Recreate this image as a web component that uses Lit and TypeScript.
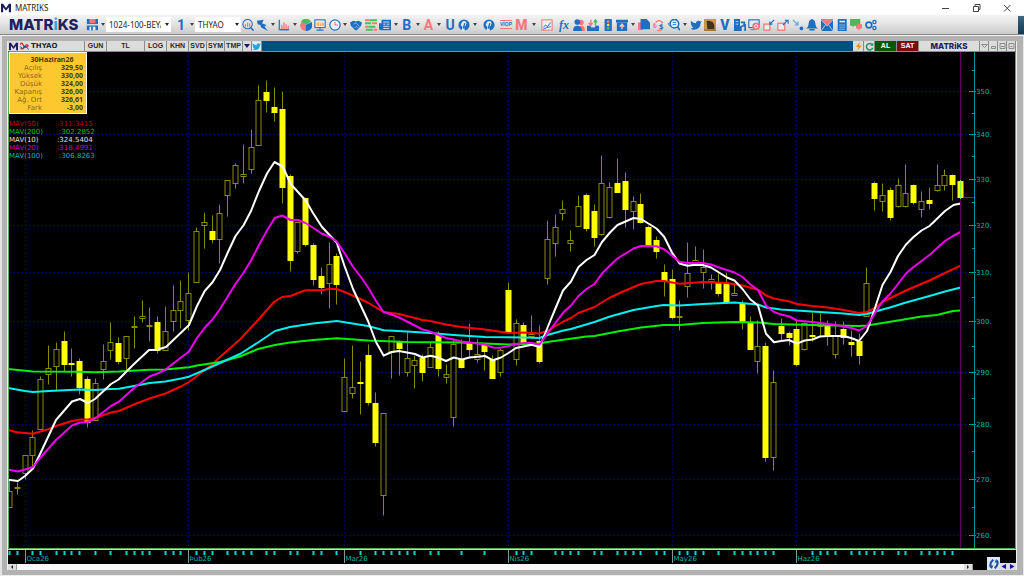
import { LitElement, html, svg, css, nothing } from "lit";
import { customElement, property } from "lit/decorators.js";

const B = "#1f6fc0";
const R = "#f4787c";

const ICONS: Record<string, unknown> = {
  save: svg`<path d="M1 0h13v13H1z" fill="${B}"/><path d="M4 0h7v5H4z" fill="${R}"/><path d="M1 6h13v1.500H1z" fill="#eee"/><path d="M4 9h7v4H4z" fill="#eee"/><path d="M6 9h2v4H6z" fill="${B}"/>`,
  search: svg`<circle cx="6.5" cy="6" r="5.500" fill="none" stroke="${B}" stroke-width="1.2"/><path d="M4 9V6M6.500 9V4M9 9V5" stroke="${R}" stroke-width="1.4"/><path d="M10 10l3.500 3.500" stroke="${B}" stroke-width="1.8"/>`,
  bolt: svg`<path d="M1 2l8-1-2 4 5 2-2 2 4 5-8-4-1-3-3-1z" fill="${B}"/>`,
  bars: svg`<path d="M1.500 1v11.500H13" fill="none" stroke="${B}" stroke-width="1.4"/><path d="M4.500 12V7M7 12V4M9.500 12V6M12 12V8" stroke="${R}" stroke-width="1.500"/><path d="M3 13h10" stroke="${B}" stroke-dasharray="1 1"/>`,
  pie: svg`<path d="M7 7V14A7 7 0 0 1 0 7L2 3z" fill="${R}"/><path d="M7 7L1 3A7 7 0 0 1 13 3z" fill="#44c25a"/><path d="M7 7l6.500-3.500A7 7 0 0 1 7 14z" fill="${B}"/>`,
  board: svg`<rect x="1" y="1" width="12" height="9" fill="#f5ead8" stroke="${B}" stroke-width="1.2"/><path d="M3.500 8V4M5.500 8V4M7.500 8V5M9.500 8V4M11 8V5" stroke="#e69a45"/><path d="M7 10v2M3 13h8" stroke="${B}" stroke-width="1.3"/>`,
  clock: svg`<circle cx="7" cy="7" r="6" fill="#eef4fa" stroke="${B}" stroke-width="1.4"/><path d="M7 3.500V7h3.500" fill="none" stroke="${R}" stroke-width="1.3"/>`,
  hands: svg`<path d="M0 4l4-2 3 1 3-1 4 2-1 4-5 5-2 0-5-5z" fill="${B}"/><path d="M4 6l3-1.500 4 4M5 9l2 2M7 8l2 2" stroke="#b9d3ee" fill="none" stroke-width=".8"/>`,
  list: svg`<path d="M0 1.500h5M8 5h6M0 9h4M10 12.500h4" stroke="${R}" stroke-width="2.500"/><path d="M5 1.500h9M0 5h7M4 9h8M1 12.500h8" stroke="#44c25a" stroke-width="2.500"/>`,
  news: svg`<path d="M3 1h11v12H2q-2 0-2-2V5h3z" fill="${B}"/><path d="M5 3.500h7M5 6h2.500M5 8.500h7M5 11h7M9 6h3" stroke="#d8e6f4" stroke-width="1.100"/>`,
  head: svg`<circle cx="7" cy="7" r="6.500" fill="${B}"/><path d="M5 3q4-2 5 2l-1 3-2 1 1 5H4l1-5-2-2z" fill="#dbe8f4"/><path d="M8 5l-2 6" stroke="${B}" stroke-width="1.500"/>`,
  chart: svg`<rect x="1" y="1" width="12" height="12" fill="#eee" stroke="${R}" stroke-width="1.2"/><path d="M2.500 10l3-3 2 2 4-5M2.500 12l4-2 5-1" fill="none" stroke="${B}" stroke-width="1.1"/>`,
  people: svg`<circle cx="9.500" cy="4" r="3" fill="${R}"/><path d="M8 8q6-1 6 6h-4z" fill="${R}"/><circle cx="5" cy="3.500" r="3.300" fill="${B}"/><path d="M0 14q0-6 5-6t5.500 6z" fill="${B}"/>`,
  inbox: svg`<path d="M0 8h4l1 2h4l1-2h4v6H0z" fill="${B}"/><path d="M4.500 1v6M2 4.500l2.500 3 2-3" stroke="${R}" stroke-width="1.600" fill="none"/><path d="M10 8V2M8 4l2-3 2 3" stroke="#44c25a" stroke-width="1.600" fill="none"/>`,
  traffic: svg`<rect x="3" y="0" width="8.500" height="14" rx="1" fill="${B}"/><circle cx="7.200" cy="3" r="1.600" fill="${R}"/><circle cx="7.200" cy="7" r="1.600" fill="#ffd83b"/><circle cx="7.200" cy="11" r="1.600" fill="#44c25a"/>`,
  folder: svg`<path d="M0 1h14v3H0zM1 4.500h12V14H1z" fill="${B}"/><path d="M7 12V7M4.500 9L7 6l2.500 3" stroke="#f7c9cb" stroke-width="1.600" fill="none"/>`,
  docs: svg`<path d="M0 4h6v9H0z" fill="${R}"/><path d="M3 0h7l4 4v8H3z" fill="${B}"/>`,
  money: svg`<path d="M3 4q4-4 8 0l-1 1M11 12q-3 2-6 1" stroke="${R}" fill="none" stroke-width="1.500"/><text x="0" y="11" font-size="8" font-weight="700" fill="${R}">₺</text><text x="7" y="12" font-size="9" font-weight="700" fill="${B}">$</text>`,
  find: svg`<circle cx="7.500" cy="5.500" r="5" fill="#e4eef8" stroke="${B}" stroke-width="1.800"/><path d="M11 9l3 4" stroke="${B}" stroke-width="2"/><path d="M5.500 4h4M5.500 6.500h4M0 6l2-2M0 6l2 2" stroke="${B}"/>`,
  bird: svg`<path d="M1 2q3 3 6 3 0-3 3-3 1.500 0 2 1l2-.5-1.500 2Q12 12 5 12.500q-3 0-4.500-1.500 2 0 3.500-1-2-.5-2.500-2h1Q.8 7 1 5z" fill="${B}"/>`,
  tweet: svg`<path d="M0 0h14v14H0z" fill="#e6eef3"/><path d="M1 2q3 3 6 3 0-3 3-3 1.500 0 2 1l2-.5-1.500 2Q12 12 5 12.500q-3 0-4.500-1.500 2 0 3.500-1-2-.5-2.500-2h1Q.8 7 1 5z" fill="#2aa3e0"/>`,
  sepia: svg`<path d="M0 0h14v14H0z" fill="#c39a4c"/><path d="M3 2q9 0 9 6v4H4z" fill="#453218"/><path d="M0 12h14v2H0z" fill="#a57c34"/>`,
  building: svg`<path d="M0 0h7v14H0z" fill="${B}"/><path d="M2 3h3M2 6h3" stroke="#cfe0f2"/><path d="M8 14V9l5-2v7M8 4h4v3" fill="none" stroke="${B}" stroke-width="2"/>`,
  monitor: svg`<rect x="1" y="1" width="12" height="9" fill="#e8edf2" stroke="${B}" stroke-width="1.300"/><path d="M3 12.500h5" stroke="${B}"/><circle cx="9.500" cy="8.500" r="4.500" fill="${R}"/><circle cx="9.500" cy="8.500" r="1.800" fill="none" stroke="#fff"/>`,
  boxin: svg`<rect x="1" y="6" width="7" height="7" fill="#eee" stroke="${R}" stroke-width="1.500"/><path d="M13 1L8 6M8 3v3h3" stroke="${B}" stroke-width="1.300" fill="none"/>`,
  boxout: svg`<rect x="1" y="5" width="8" height="8" fill="#eee" stroke="${R}" stroke-width="1.500"/><path d="M7 7l5-5M9 1.500h4v4" stroke="${B}" stroke-width="1.300" fill="none"/>`,
  arrow: svg`<path d="M1 1l6 6M7 3v4H3" stroke="#5da5dc" stroke-width="1.300" fill="none"/><circle cx="11" cy="11" r="2.200" fill="${B}"/>`,
  bell: svg`<path d="M7 0q4 1 4 6 0 3 3 5H0Q3 9 3 6 3 1 7 0z" fill="${B}"/><path d="M4 12.500h6" stroke="${B}" stroke-width="2"/>`,
  mail: svg`<path d="M0 0h14v14H0z" fill="${B}"/><path d="M0 0h14L7 8z" fill="${R}"/><path d="M0 1l7 7 7-7M0 14l5-7M14 14L9 7" stroke="#e9eef4" stroke-width=".8" fill="none"/>`,
  calc: svg`<rect x="2" y="0" width="10.500" height="14" rx="1" fill="${B}"/><path d="M4 3h6.500" stroke="#dce9f5" stroke-width="2"/><path d="M4 7h6.500M4 9.500h6.500M4 12h6.500" stroke="#dce9f5" stroke-dasharray="1.500 .8"/>`,
  chat: svg`<path d="M7 6h7v5h-2l-2 3v-3H7z" fill="${R}"/><path d="M0 0h12v8H5l-2 2V8H0z" fill="#4bb95a"/><circle cx="10.500" cy="8.500" r="3" fill="${R}"/>`,
  gears: svg`<circle cx="4.500" cy="7" r="3.300" fill="none" stroke="${B}" stroke-width="2"/><circle cx="11" cy="3.500" r="1.900" fill="none" stroke="${B}" stroke-width="1.500"/><circle cx="11" cy="10.500" r="1.900" fill="none" stroke="${B}" stroke-width="1.500"/>`,
  flash: svg`<path d="M9 0L3 7l4 1-3 6 8-8-4-1z" fill="#f0930c"/>`,
  reload: svg`<path d="M11 4A5 5 0 1 0 12 9" stroke="#169b6b" stroke-width="2.500" fill="none"/><path d="M13 1v5H8z" fill="#169b6b"/>`,
  sync: svg`<path d="M6 1Q0 6 3 12M8 13q6-5 3-11" fill="none" stroke="#1d56a5" stroke-width="3"/><path d="M0 9h6l-2 5zM8 5h6l-4-5z" fill="#1d56a5"/>`,
  spark: svg`<path d="M0 4q3-5 5 1t8 1M1 10q4 2 6-2 3-6 6-2" stroke="#c62b3c" stroke-width="2" fill="none"/><path d="M0 7l4 3 4-4 6 6" stroke="#2b3fa5" stroke-width="1.500" fill="none"/>`,
  mark: svg`<path d="M0 13V1h3l4 6 4-6h3v12h-3V6l-4 5-4-5v7z" fill="#1b1b5e"/>`,
};

type Tool = { icon?: string; glyph?: string; tone?: string; label: string; menu?: boolean };
const t = (icon: string, label: string, menu = false): Tool => ({ icon, label, menu });
const g = (glyph: string, tone: string, label: string, menu = false): Tool => ({ glyph, tone, label, menu });

const GROUPS: { cls: string; tools: Tool[] }[] = [
  { cls: "g-main", tools: [t("search", "Ara"), t("bolt", "Hızlı", true), t("bars", "Grafik", true), t("pie", "Dağılım"), t("board", "Tahta"), t("clock", "Saat", true), t("hands", "Takas"), t("list", "Derinlik"), t("news", "Haber", true), g("B", "blue", "B", true), g("A", "red", "A", true), g("U", "blue", "U"), t("head", "Analiz", true)] },
  { cls: "", tools: [t("head", "Uzman")] },
  { cls: "g-mid", tools: [g("VİOP", "tiny", "VİOP"), g("M", "red heavy", "M", true)] },
  { cls: "", tools: [t("chart", "Gösterge")] },
  { cls: "g-wide", tools: [g("fx", "fx", "Formül"), t("people", "Kullanıcı"), t("inbox", "Emir"), t("traffic", "Sinyal"), t("folder", "Sayfa", true), t("docs", "Kopya"), t("money", "Döviz"), t("find", "Tarama", true), t("bird", "Twitter"), t("sepia", "Portre"), g("V", "blue heavy", "V"), t("building", "Şirket"), t("monitor", "Ekran"), t("boxin", "Küçült"), t("boxout", "Büyüt"), t("arrow", "Taşı"), t("bell", "Alarm"), t("mail", "Mesaj"), t("calc", "Hesap"), t("chat", "Sohbet"), t("gears", "Ayarlar")] },
];

/* One session per row: high, body top, body bottom, low, 1 when the close is below the open. */
const CANDLES: number[][] = [
  [480,491,507,507,0],[482,487.5,488,494,0],[455,455,473,479,0],[430,437,455.5,466,0],[376,379,429,429,0],[345,368.5,374.5,384.5,0],[342.5,349,366.5,390,0],[331.5,341.7,364,371,1],[348.7,363,364.5,376.7,1],[358.7,361.7,387.7,394.5,1],
  [376.7,379.5,422.5,427.3,1],[378,383.3,420.5,420.5,0],[344,361.5,369.7,379.5,0],[322.7,342.5,350.7,359,0],[337.5,343,361.7,364,1],[336.5,336.5,358.7,371.7,0],[316,326.3,326.7,348,0],[300,316.7,318.7,322.7,0],[307.3,325,326.5,341.3,0],[316,322.7,350,353,1],
  [306,331.5,350.3,350.3,0],[285,310.5,321.5,331.5,0],[280.7,301.5,310.5,328,0],[272.3,293,320.3,330.7,0],[227.7,231,282.3,282.3,0],[212,222.5,225,248,0],[215.3,231.5,239,243.7,1],[204,213.3,239,263.3,0],[180,180.7,195.3,216.7,0],[163.7,165.3,183.7,188.3,0],
  [144,174.5,176.5,183,0],[129,147.5,169.5,173.7,0],[85,100.3,145.3,145.3,0],[80,92.3,100.7,112.7,1],[87.3,107,112.7,121.3,1],[91,109,187,203.3,1],[174,176.3,260.3,271.3,1],[222.3,222.3,251.3,253.7,0],[197,198.3,244.7,246.7,1],[243,245,279.7,285.7,1],
  [267.3,276,287,294.7,1],[242,264.3,283.3,308.7,0],[253,256.7,284.3,304.7,1],[358.7,377,411.3,411.3,0],[345,387.3,393.7,398,0],[361.7,382.3,383.7,414,1],[344.7,355.3,402.7,405,1],[392.7,403.3,442.3,446.7,1],[413.3,413.3,495.7,515.7,0],[336.3,336.3,352,378,0],
  [340,342.7,348,375.3,1],[332.7,358,372.3,376,0],[355,360.3,365.7,388.7,0],[354,358,372.3,381.3,1],[342.7,347.3,367,367,0],[331.3,334.7,368.3,376.7,1],[364,374.7,377,383.3,0],[338,344,417.7,426.3,0],[339,359.3,367,368.3,1],[323.3,343.3,349,357.3,1],
  [339,354.3,359,362.7,0],[344,345.3,351.7,370,1],[355,359,378.7,378.7,1],[348,350.3,372.7,376,0],[282.7,290,331.7,331.7,1],[319,323,359.3,365,0],[322.7,325,342,342,1],[315,334,336.3,338.7,0],[325,341.7,361.7,363.3,1],[220,239,278.3,284,0],
  [214,227.3,243.7,256.7,0],[200,209.3,213.3,220,0],[230.7,240.3,243.7,251.7,0],[195,206.3,226.7,226.7,0],[193,195,228.3,231.7,1],[204.3,211,237.7,246.7,1],[155.7,183.3,234.7,235,0],[182.3,187.3,217.7,218,0],[158.7,183.3,192.7,192.7,1],[172.7,181,209.3,227.3,1],
  [196.7,201.3,211.3,229,0],[193.3,204.3,222.3,223.7,1],[225,227,245.7,245.7,1],[236,240.3,251,258.7,1],[264.7,272.3,280,296,1],[269.3,279.7,317.7,319.3,1],[300,316.3,317.7,330,0],[242,273.7,286.7,297.3,0],[246.7,260.3,262.7,265,0],[249.3,267.3,272.7,288,0],
  [274.3,279.3,281.3,289.7,0],[273.3,283.3,293.3,296,1],[272,283.7,302,302,1],[284.3,293,295.7,295.7,0],[300,303.3,321.7,329.3,1],[316,323,349.3,349.3,1],[320,346.3,361.7,373.3,0],[342.7,346,457.3,461,1],[370.7,382.3,457.3,470.7,0],[318.7,326,333.7,340.3,1],
  [331,333.3,337.7,345,1],[319,329,364.7,366.7,1],[322,323,349.3,350,0],[312,335,336.3,341.7,1],[313,323.7,326.3,336.7,0],[320,325,336.3,345,1],[321,335,354.3,358.7,0],[321,329,337.3,344,1],[330,342,344.3,356,1],[333.3,341.3,355.7,364.3,1],
  [267.3,283.3,316,316,0],[181.3,183.3,198.7,210,1],[183.3,195.3,201.7,211.7,0],[187,190.3,217.3,220.7,1],[178.7,185.3,206.7,207,0],[164,193.3,206.7,207,0],[184,185.3,202.7,204.3,1],[191,201.3,209.3,217,0],[187,200.3,203.3,209.7,1],[164,185.3,190.7,191,0],
  [169,175.3,185.3,190,0],[174,175.3,184,200.7,1],[179,181,197,206,1],
];

const LINES: [string, string][] = [
  ["#ff0000", "8,430 17,432.3 33,433.7 49,429 56,426 72,421 80,419.5 88,419.5 95,418 111,412.5 119,411 134,404.5 149.5,398.5 165.5,393.5 181,386.5 189,382 197,376 212,364.5 220,357 240,339.5 258.5,319.5 274.5,301.5 282,297 290.5,296 298,293 305.5,290.3 321.5,290.3 329,289 336.7,289 344.5,292 360.5,299 368.5,303 383.7,312 399,314 422.5,320 430,321 446,324.5 461.5,327 485,329.5 508.5,333 524,332.5 539.5,333.5 547,331 563.5,321.5 571,318 578.5,313 594.5,307 610,297.5 625.5,290.5 641,284 656.5,281 664,281 679.5,283.7 703,282 727,283 742.5,285.5 758,289.7 766,295.5 774,298.5 789.5,301.5 797,304 812,306 828,307.5 843.5,310 859,313 867,312 875,308 882.5,302 906,290.5 929.5,280.5 945,273 960.5,265.7"],
  ["#00f000", "8,369 33,371.5 80,371.7 95,372.3 119,371.5 149.5,369.7 165,369.5 189,367.3 197,365.5 220,362 240,356.5 258,349 275,345 290,342.5 313,340 337,338.3 368,340.5 407,342 461.5,342.5 508.5,344.5 539.5,343.5 547.3,342 586.5,336.5 594.5,336 617.5,331.5 641,327.5 664,325 679.5,325 703,323 734.5,322 758,322.5 774,324 812,325 859,326 867,325.5 898,320.5 921.5,316.5 937,315 953,311 960.5,310.5"],
  ["#00f0f0", "8,388 25,391 33,392 49,391 80,389.5 95,390 111,389 119,388.7 134,386 149.5,383 165.5,381.5 181,378.5 189,376.7 204.5,370 220,363 240,354 258,342.5 275,331 290,327 313,323.5 337,321 368,326 383.7,330.3 407,331.5 430,333 453.5,335 485,337 524,337.5 539.5,338 547.3,335 563.5,330.5 571,329 594.5,322 610,316.5 633.5,310 656.5,306 664,305 679.5,305.5 703,304 734.5,302.5 758,304.5 766,307.5 781,309.5 812,311.5 828,312.5 843.5,313.5 859,315 867,314 882.5,309.5 890,307.5 906,302.5 929.5,296 945,291.5 960.5,287.5"],
  ["#ffffff", "8,479.7 18,481 25,476 33,468.5 41,452 56,420 72,401.5 80,399 88,403 95,399 111,384 118.6,379.5 134,364 149,350 157,349.7 166,347 189,325 197,306 204.7,291 212.7,282 220,270 228,252 235.5,236 243.7,225 251,211 259,191 267,173.5 274.5,162 282.7,166.5 290.7,184 305.7,200.5 313,213 322,227 329,234.5 336.7,242.5 344.5,266 353,289 368,321 376,342 383.7,355.7 391.5,352 399,351 415,354 422.7,357.5 430.5,355.7 438,357.5 446,361 453.7,357.5 462,359.5 469.5,357.5 485,356 493,360.3 501,357.5 508.5,353 516,348 531.7,344.7 539.7,347 547.3,328 555,309.5 563,290.5 571,281.5 578.5,267 586.5,260 594.5,255 602,242 610,232.5 617.5,225 625.5,221.5 633.5,218 641,219 656.5,228.5 664.3,237 672,252.5 679.5,263.5 687.5,265.7 695.5,264.7 703,265 711,267.5 727,277.5 734.5,280.5 742.5,289 750.5,299.5 758,305.5 766,333.8 774,342.3 781,341 789,340 797,343.7 804.6,340.5 812.5,339.5 820,336.5 828,336 843.5,336 851,338 859,341 867,331 875,308 882.5,285 890.5,272 898,256 906,244.5 913.5,237 921.5,230.5 929.5,226 945,211 953.5,205 960.5,203.5"],
  ["#f000f0", "8,469.5 17.7,471.5 25,469.5 33,467 41,457 56,440 72,425.5 80,422.5 88,422 95,418.5 111,406 119,401.7 134,388 149.5,376.5 157.5,373.5 165,370 181,357.5 189,351.5 197,338 204.5,328 212.5,319.5 220,309 235.5,284 243.7,272.5 251,260.5 259,245 267,230.5 274.7,218 282.3,215.5 290.5,220 298,220 305.5,223 313.5,228 321.5,233.5 329,236.5 336.7,241.5 344.5,253 352.5,266 360.5,276.5 368.5,288 376,301 383.5,312 391.5,314.5 399,317.5 407,321.5 422.5,329.5 430,331.5 446,338 453.5,339.5 461.5,341.5 469,342.5 485,344.5 493,347.5 500,347.7 508.5,346 516.5,344 524,343 532,343 539.5,344.5 547,334 563.5,312.3 571,305.5 578.5,296 586.5,289 594.5,284 602,273.5 610,265.5 617.5,258.5 633.5,248.5 641,246 656.5,246.3 664.5,249.5 679.5,261.7 687.5,263 703,263 711,264.5 719,267.5 734.5,272.5 742.5,277 750.5,284.5 758,290 766,305.5 774,312 781,314.5 789.5,316.5 797,320.5 812,322 828,324 836,325 851.5,328 859,330.5 867,326 875,313 882.5,301.5 890,294 898,284 906,273.5 913.5,267 929.5,255 945,241 953,236 960.5,232"],
];

const PRICES: [number, number][] = [[350,91],[340,134],[330,179],[320,225],[310,272],[300,321],[290,372],[280,424],[270,479],[260,535]];
const HALF = [70, 113, 156, 202, 248, 297, 346, 398, 451, 507];
const MONTHS: [string, number][] = [["Oca26", 2], ["Þub26", 23], ["Mar26", 43], ["Nis26", 64], ["May26", 85], ["Haz26", 101]];
const DAY_TICKS = [0,1,3,4,6,7,8,9,11,13,15,16,17,18,20,21,22,24,25,26,28,29,30,31,33,34,36,37,39,40,42,45,47,48,49,50,51,52,54,55,58,61,65,66,67,70,71,72,73,75,76,78,79,80,81,83,84,86,87,88,89,91,93,94,95,96,97,98,103,104,105,106,108,109,110,111,112,114,115,117,118,119,120,121];

const xAt = (i: number) => Math.round(9.5 + i * 7.795 - 0.5) + 0.5;

@customElement("mx-icon")
class MxIcon extends LitElement {
  @property() name = "";
  static styles = css`
    :host { display: block; width: 12px; height: 12px; }
    .art { display: block; width: 100%; height: 100%; font-family: "Noto Sans", sans-serif; }
  `;
  render() {
    return html`<svg class="art" viewBox="0 0 14 14" aria-hidden="true">${ICONS[this.name]}</svg>`;
  }
}

@customElement("mx-toolbar")
class MxToolbar extends LitElement {
  static styles = css`
    :host { display: flex; align-items: center; height: 20px; flex: none; padding-left: 9px;
      background: linear-gradient(#f3f3f3, #e4e4e4 45%, #cbcbcb); border-bottom: 1px solid #858585; box-sizing: border-box;
      font-family: "Noto Sans", sans-serif; }
    .logo { font: 800 15px/18px Inter, sans-serif; color: #211f5f; width: 76px; }
    .logo .i { color: #35a3dc; }
    button { display: grid; place-items: center; border: 0; background: none; padding: 0; width: 14px; height: 16px; font-family: Roboto, sans-serif; }
    .caret { width: 7px; }
    .caret::before { content: ""; border: 2px solid transparent; border-top: 3px solid #444; border-bottom: 0; }
    .blue { color: #1f6fc0; font: 700 14px/14px Roboto, sans-serif; }
    .red { color: #f4787c; font: 700 14px/14px Roboto, sans-serif; }
    .blue.heavy, .red.heavy { font-weight: 900; }
    .fx { color: #1f6fc0; font: italic 700 12px/12px "Liberation Serif", serif; }
    .tiny { color: #1f6fc0; font: 700 5px/7px "Liberation Sans", sans-serif; border-top: 1px solid #f4787c; border-bottom: 1px solid #f4787c; }
    .box { position: relative; height: 15px; display: flex; background: #fff; }
    .page { width: 65px; }
    .symbol { width: 46px; }
    .one { width: 14px; }
    .page + .one { margin-left: 3px; }
    select { appearance: none; border: 0; background: none; margin: 0; padding: 0 0 0 3px; width: 100%; color: #222; border-radius: 0;
      font: 8px/15px "Noto Sans", sans-serif; }
    .page select { width: 55px; overflow: hidden; text-overflow: clip; }
    .box::after { content: ""; position: absolute; right: 2px; top: 6px; border: 2px solid transparent; border-top: 3px solid #222; border-bottom: 0; }
    .groups { display: flex; gap: 3px; flex: none; }
    .group { display: flex; justify-content: space-between; }
    .g-main { width: 238px; }
    .g-mid { width: 38px; }
    .g-wide { width: 321px; }
    .edge { margin-left: auto; width: 6px; height: 18px; background: linear-gradient(#3d6782, #15384f); }
  `;
  tool(x: Tool) {
    return html`<button aria-label=${x.label}>${x.icon ? html`<mx-icon name=${x.icon}></mx-icon>` : html`<span class=${x.tone}>${x.glyph}</span>`}</button>
      ${x.menu ? html`<button class="caret" aria-label="${x.label} menüsü"></button>` : nothing}`;
  }
  render() {
    return html`
      <span class="logo">MATR<span class="i">i</span>KS</span>
      <button aria-label="Kaydet"><mx-icon name="save"></mx-icon></button>
      <button class="caret" aria-label="Kaydet menüsü"></button>
      <label class="box page"><select aria-label="Sayfa"><option>1024-100-BEYAZ</option></select></label>
      <button class="one" aria-label="1"><span class="blue">1</span></button>
      <button class="caret" aria-label="1 menüsü"></button>
      <label class="box symbol"><select aria-label="Sembol"><option>THYAO</option></select></label>
      <div class="groups">${GROUPS.map((x) => html`<div class="group ${x.cls}">${x.tools.map((y) => this.tool(y))}</div>`)}</div>
      <span class="edge"></span>`;
  }
}

@customElement("mx-chart")
class MxChart extends LitElement {
  static styles = css`
    :host { display: block; position: relative; flex: 1; min-height: 0; background: #000; font-family: "DejaVu Sans", sans-serif; }
    .plot { display: block; width: 100%; height: 100%; }
    .grid { stroke: #000058; stroke-dasharray: 2 2; }
    .axis { stroke: #009494; fill: none; }
    .lbl { fill: #00b0b0; font-size: 7px; }
    .wick { stroke: #8a8a00; fill: none; }
    .full { fill: #ffff00; stroke: #ffff00; }
    .ma { fill: none; stroke-width: 2; stroke-linejoin: round; }
    .panel { position: absolute; left: 1px; top: 1px; width: 78px; box-sizing: border-box; padding: 3px 3px 1px; background: #fdc82f;
      border: 1px solid #fff; color: #4a3705; font-size: 7px; line-height: 8px; }
    table { border-collapse: collapse; width: 100%; }
    caption { font: 700 7px/8px "Noto Sans", sans-serif; padding-left: 8px; }
    th { font-weight: 400; text-align: right; padding: 0; color: #87691a; width: 29px; }
    td { font: 700 7px/8px "Noto Sans", sans-serif; text-align: right; padding: 0; }
    .mavs { position: absolute; left: 1px; top: 69px; margin: 0; padding: 0; list-style: none; font-size: 7px; line-height: 8px; }
    .mavs li { display: flex; gap: 16px; }
    .mavs .tag { min-width: 32px; }
    .m50 { color: #b40000; } .m200 { color: #00c000; } .m10 { color: #e4e4e4; } .m20 { color: #c000c0; } .m100 { color: #00b4b4; }
  `;
  candle(c: number[], i: number) {
    const x = xAt(i);
    const [h, a, b, l] = c.slice(0, 4).map((v) => Math.round(v - 0.5) + 0.5);
    return svg`<path class="wick" d="M${x} ${h}V${a}M${x} ${b}V${l}"/>
      <rect class=${c[4] ? "full" : "wick"} x=${x - 2.5} y=${a} width="5" height=${Math.max(b - a, 1)}/>`;
  }
  render() {
    const days: [string, string][] = [["Açılış", "329,50"], ["Yüksek", "330,00"], ["Düşük", "324,00"], ["Kapanış", "326,00"], ["Ağ. Ort", "326,61"], ["Fark", "-3,00"]];
    const mavs: [string, string][] = [["50", "311.3415"], ["200", "302.2852"], ["10", "324.5404"], ["20", "318.4991"], ["100", "306.8263"]];
    return html`
      <svg class="plot" viewBox="8 51 1008 513" role="img" aria-label="THYAO günlük grafik">
        ${PRICES.map(([, y]) => svg`<path class="grid" d="M9 ${y + 0.5}H968"/>`)}
        ${MONTHS.map(([, i]) => svg`<path class="grid" d="M${xAt(i)} 52V548"/>`)}
        ${CANDLES.map((c, i) => this.candle(c, i))}
        ${LINES.map(([c, p]) => svg`<polyline class="ma" stroke=${c} points=${p}/>`)}
        <path d="M960.5 52V548" stroke="#600060"/>
        <path d="M960.5 180V199" stroke="#7cff40"/>
        <path d="M964 197.500H974" stroke="#007000"/>
        <path class="axis" d="M974.500 52V548"/>
        ${PRICES.map(([p, y]) => svg`<path class="axis" d="M969 ${y + 0.5}H976"/><text class="lbl" x="976" y=${y + 3}>${p}.</text>`)}
        ${HALF.map((y) => svg`<path class="axis" d="M972 ${y + 0.5}H975"/>`)}
        <path d="M8.500 548.500V51.500H1015.500V548.500z" fill="none" stroke="#5fa85f"/>
        <path d="M8 549.500H1016" stroke="#c8d8c8"/>
        ${DAY_TICKS.map((i) => svg`<path d="M${xAt(i)} 551V555" stroke="#00d8d8" stroke-width="2"/>`)}
        ${MONTHS.map(([m, i]) => svg`<path d="M${xAt(i)} 550V563" stroke="#8a9494"/><text class="lbl" x=${xAt(i) + 1} y="561">${m}</text>`)}
      </svg>
      <div class="panel"><table><caption>30Haziran26</caption>
        <tbody>${days.map(([k, v]) => html`<tr><th scope="row">${k}</th><td>${v}</td></tr>`)}</tbody></table></div>
      <ul class="mavs">${mavs.map(([n, v]) => html`<li class="m${n}"><span class="tag">MAV(${n})</span><span>:${v}</span></li>`)}</ul>`;
  }
}

@customElement("app-root")
class AppRoot extends LitElement {
  static styles = css`
    :host { display: flex; flex-direction: column; height: 100vh; background: #fff; font-family: "Noto Sans", sans-serif; overflow: hidden; }
    button { border: 0; padding: 0; margin: 0; background: none; font: inherit; color: inherit; }
    .title { display: flex; align-items: center; height: 15px; flex: none; padding: 0 12px 0 1px; font-size: 8px; color: #222; }
    .title mx-icon { width: 10px; height: 10px; margin-right: 4px; }
    .wins { margin-left: auto; display: flex; gap: 21px; }
    .wins button { width: 10px; height: 10px; }
    .wins svg { display: block; width: 10px; height: 10px; fill: none; stroke: #444; }
    .desk { flex: 1; min-height: 0; display: flex; flex-direction: column; background: #b2b2b2; padding: 0 6px 5px 5px;
      border-top: 1px solid #f4f4f4; border-left: 2px solid #e2e2e2; border-bottom: 1px solid #eee; border-right: 1px solid #e8e8e8; }
    .win { flex: 1; min-height: 0; display: flex; flex-direction: column; margin-top: 5px; border-left: 1px solid #eee; border-right: 1px solid #eee; }
    .head { display: flex; height: 10px; flex: none; background: #00507f; font: 700 7px/10px "Liberation Sans", sans-serif; color: #2a2a2a; }
    .head > * { box-sizing: border-box; background: #dcdcdc; border-right: 1px solid #8a8a8a; display: grid; place-items: center; }
    .head mx-icon { width: 9px; height: 9px; }
    .head .mk { border: 0; } .mk { width: 10px; } .sp { width: 13px; }
    .head .name { width: 54px; justify-items: start; font: 700 7px/10px "DejaVu Sans", sans-serif; }
    .w21 { width: 22px; } .w37 { width: 38px; } .w17 { width: 18px; }
    .w10 { width: 10px; } .w11 { width: 11px; } .w9 { width: 9px; }
    .down::before { content: ""; border: 3px solid transparent; border-top: 4px solid #1b1b5e; border-bottom: 0; }
    .head .fill { flex: 1; background: none; border: 0; }
    .head .al { width: 22px; background: #0b560b; color: #fff; }
    .head .sat { width: 22px; background: #7a0c0c; color: #fff; }
    .head .brand { width: 61px; font: 800 8px/10px Inter, sans-serif; color: #211f5f; }
    .w9 svg { width: 7px; height: 7px; fill: none; stroke: #8a8a8a; }
    .foot { position: relative; display: flex; height: 6px; flex: none; background: #000; }
    .bar { flex: 1; display: flex; justify-content: space-between; background: #f8f8f8; margin-right: 43px; }
    .step { width: 9px; background: #dedede; display: grid; place-items: center; border-right: 1px solid #999; }
    .step svg { width: 4px; height: 4px; fill: #222; }
    .nav { position: absolute; right: 0; bottom: 0; display: flex; align-items: flex-end; }
    .nav .sync { width: 13px; height: 13px; background: #dfe6f0; display: grid; place-items: center; }
    .nav .sync mx-icon { width: 10px; height: 10px; }
    .nav .go { width: 8px; height: 7px; background: #dedede; }
    .nav svg { display: block; width: 8px; height: 7px; fill: #0a0ab4; }
  `;
  render() {
    return html`
      <header class="title"><mx-icon name="mark"></mx-icon><span>MATRIKS</span>
        <div class="wins">
          <button aria-label="Simge durumuna küçült"><svg viewBox="0 0 10 10"><path d="M2 5.500h7"/></svg></button>
          <button aria-label="Önceki boyut"><svg viewBox="0 0 10 10"><path d="M2.500 3.500h5v5h-5zM4 3.500v-2h5v5H7.500"/></svg></button>
          <button aria-label="Kapat"><svg viewBox="0 0 10 10"><path d="M2 2l6.500 6.500M8.500 2L2 8.500"/></svg></button>
        </div>
      </header>
      <mx-toolbar></mx-toolbar>
      <main class="desk"><section class="win">
        <div class="head">
          <span class="mk"><mx-icon name="mark"></mx-icon></span>
          <button class="mk sp" aria-label="Grafik türü"><mx-icon name="spark"></mx-icon></button>
          <span class="name">THYAO</span>
          <button class="w21">GUN</button><button class="w37">TL</button><button class="w21">LOG</button>
          <button class="w21">KHN</button><button class="w17">SVD</button><button class="w17">SYM</button><button class="w17">TMP</button>
          <button class="w9 down" aria-label="Liste"></button>
          <button class="w10" aria-label="Twitter"><mx-icon name="tweet"></mx-icon></button>
          <span class="fill"></span>
          <button class="w11" aria-label="Hızlı emir"><mx-icon name="flash"></mx-icon></button>
          <button class="w11" aria-label="Yenile"><mx-icon name="reload"></mx-icon></button>
          <button class="al">AL</button><button class="sat">SAT</button>
          <span class="brand">MATRiKS</span>
          <button class="w9" aria-label="Menü"><svg viewBox="0 0 7 7"><path d="M0.500 1.500h6l-3 3z"/></svg></button>
          <button class="w9" aria-label="Küçült"><svg viewBox="0 0 7 7"><path d="M1.500 3.500h4v2h-4z"/></svg></button>
          <button class="w9" aria-label="Büyüt"><svg viewBox="0 0 7 7"><path d="M1 .5h5v5H1zM2 3.500h3"/></svg></button>
          <button class="w9" aria-label="Kapat"><svg viewBox="0 0 7 7"><path d="M1 .5h5v5H1zM2.500 3.500h2"/></svg></button>
        </div>
        <mx-chart></mx-chart>
        <div class="foot">
          <div class="bar">
            <button class="step" aria-label="Sola kaydır"><svg viewBox="0 0 4 4"><path d="M3 0v4L1 2z"/></svg></button>
            <button class="step" aria-label="Sağa kaydır"><svg viewBox="0 0 4 4"><path d="M1 0v4l2-2z"/></svg></button>
          </div>
          <div class="nav">
            <button class="sync" aria-label="Eşitle"><mx-icon name="sync"></mx-icon></button>
            <button class="go" aria-label="Geri"><svg viewBox="0 0 8 7"><path d="M6 1v5L1.500 3.500z"/></svg></button>
            <button class="go" aria-label="İleri"><svg viewBox="0 0 8 7"><path d="M2 1v5l4.500-2.500z"/></svg></button>
          </div>
        </div>
      </section></main>`;
  }
}
